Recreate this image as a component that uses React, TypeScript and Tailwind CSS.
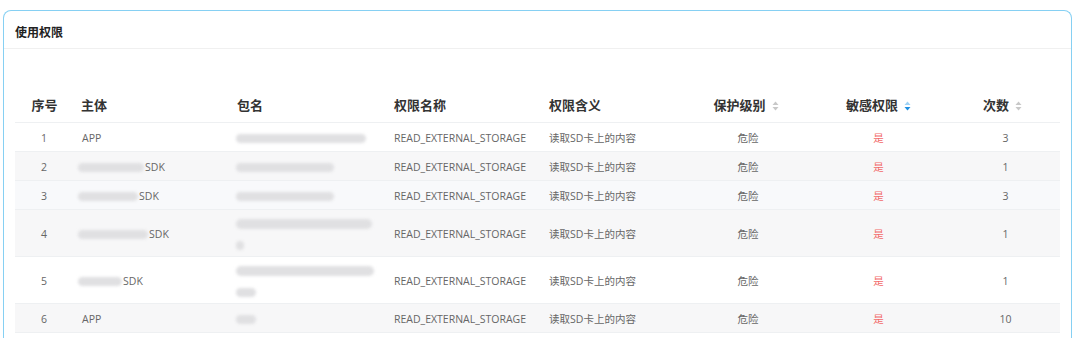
import React from 'react';

type Row = {
  no: number;
  subjectBlur?: number; // width of redacted part before "SDK"
  subject: string;
  pkg: number[]; // widths of redacted lines
  tall?: boolean;
  bg: string;
};

const rows: Row[] = [
  { no: 1, subject: 'APP', pkg: [130], bg: 'bg-white' },
  { no: 2, subjectBlur: 66, subject: 'SDK', pkg: [98], bg: 'bg-[#f7f7f8]' },
  { no: 3, subjectBlur: 60, subject: 'SDK', pkg: [98], bg: 'bg-[#f8f9fb]' },
  { no: 4, subjectBlur: 70, subject: 'SDK', pkg: [136, 8], tall: true, bg: 'bg-[#f7f7f8]' },
  { no: 5, subjectBlur: 44, subject: 'SDK', pkg: [138, 20], tall: true, bg: 'bg-white' },
  { no: 6, subject: 'APP', pkg: [20], bg: 'bg-[#f7f7f8]' },
];

const counts = [3, 1, 3, 1, 1, 10];

const COLS = 'grid grid-cols-[58px_156px_157px_155px_139px_132px_133px_115px]';

const SortIcon = ({ active = false }: { active?: boolean }) => (
  <svg width="7" height="10" viewBox="0 0 7 10" className="ml-[6px]">
    <path d="M3.5 0.5 L6.5 4 L0.5 4 Z" fill={active ? '#9fd2f5' : '#c8c8c8'} />
    <path d="M3.5 9.5 L6.5 6 L0.5 6 Z" fill={active ? '#1e8fe1' : '#c8c8c8'} />
  </svg>
);

const Redacted = ({ w, h = 10 }: { w: number; h?: number }) => (
  <span
    className="inline-block rounded-full bg-[#e0e0e2] blur-[1.5px]"
    style={{ width: w, height: h }}
  />
);

export default function App() {
  return (
    <div
      className="w-[1080px] h-[338px] overflow-hidden bg-white pt-[10px] pl-[3px]"
      style={{ fontFamily: '"Open Sans", "Noto Sans CJK SC", sans-serif' }}
    >
      <div className="w-[1069px] h-[340px] border border-b-0 border-[#86d0f3] rounded-t-[8px]">
        <div className="h-[38px] px-[11px] pt-[6px] flex items-center border-b border-[#f0f0f0] text-[12px] font-bold text-[#222]">
          使用权限
        </div>
        <div className="px-[11px] pt-[37px]">
          <div className={`${COLS} h-[37px] pt-[3px] items-center border-b border-[#eef0f2] text-[13px] font-bold text-[#333]`}>
            <div className="text-center pl-[1px]">序号</div>
            <div className="pl-[8px]">主体</div>
            <div className="pl-[8px]">包名</div>
            <div className="pl-[8px]">权限名称</div>
            <div className="pl-[8px]">权限含义</div>
            <div className="flex items-center justify-center">保护级别<SortIcon /></div>
            <div className="flex items-center justify-center">敏感权限<SortIcon active /></div>
            <div className="flex items-center justify-center">次数<SortIcon /></div>
          </div>
          {rows.map((r, i) => (
            <div
              key={r.no}
              className={`${COLS} ${r.tall ? 'h-[47px]' : 'h-[29px]'} ${r.bg} pt-[3px] items-center border-b border-[#eef0f2] text-[10.5px] text-[#666]`}
            >
              <div className="text-center">{r.no}</div>
              <div className="pl-[5px] flex items-center">
                {r.subjectBlur ? <Redacted w={r.subjectBlur} h={9} /> : <span className="pl-[4px]" />}
                <span className={r.subjectBlur ? 'ml-[1px]' : ''}>{r.subject}</span>
              </div>
              <div className="pl-[7px] flex flex-col gap-[11px] justify-center">
                {r.pkg.map((w, k) => (
                  <div key={k} className="h-[10px] flex items-center">
                    <Redacted w={w} h={k === 0 && r.pkg.length > 1 ? 10 : 9} />
                  </div>
                ))}
              </div>
              <div className="pl-[8px]">READ_EXTERNAL_STORAGE</div>
              <div className="pl-[8px]">读取SD卡上的内容</div>
              <div className="text-center pl-[4px]">危险</div>
              <div className="text-center text-[#f26a6a]">是</div>
              <div className="text-center pl-[6px]">{counts[i]}</div>
            </div>
          ))}
        </div>
      </div>
    </div>
  );
}
